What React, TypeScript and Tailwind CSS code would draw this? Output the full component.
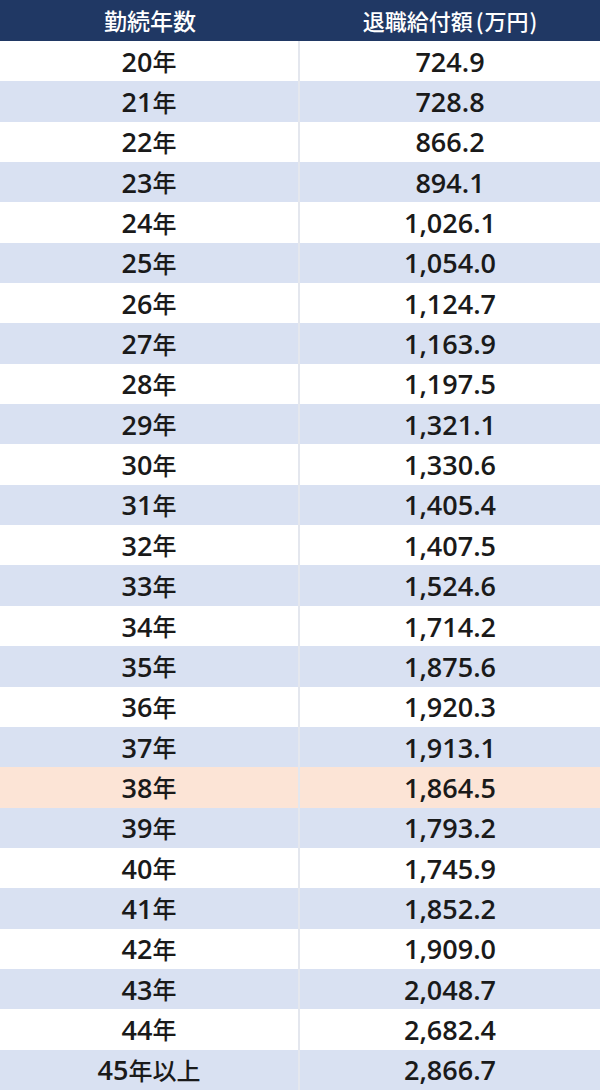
import React from "react";

const rows: [string, string][] = [
  ["20", "724.9"],
  ["21", "728.8"],
  ["22", "866.2"],
  ["23", "894.1"],
  ["24", "1,026.1"],
  ["25", "1,054.0"],
  ["26", "1,124.7"],
  ["27", "1,163.9"],
  ["28", "1,197.5"],
  ["29", "1,321.1"],
  ["30", "1,330.6"],
  ["31", "1,405.4"],
  ["32", "1,407.5"],
  ["33", "1,524.6"],
  ["34", "1,714.2"],
  ["35", "1,875.6"],
  ["36", "1,920.3"],
  ["37", "1,913.1"],
  ["38", "1,864.5"],
  ["39", "1,793.2"],
  ["40", "1,745.9"],
  ["41", "1,852.2"],
  ["42", "1,909.0"],
  ["43", "2,048.7"],
  ["44", "2,682.4"],
  ["45", "2,866.7"],
];

export default function App() {
  return (
    <div className="w-[600px] h-[1090px] grid grid-cols-[300px_300px] grid-rows-[41px_repeat(26,minmax(0,1fr))] bg-white font-['Open_Sans','Noto_Sans_CJK_JP',sans-serif]">
      <div className="bg-[#203864] text-white text-[23px] font-medium flex items-center justify-center font-['Noto_Sans_CJK_JP',sans-serif]">
        勤続年数
      </div>
      <div className="bg-[#203864] text-white text-[22px] font-medium flex items-center justify-center font-['Noto_Sans_CJK_JP',sans-serif]">
        退職給付額<span className="pl-[3px] pr-[1px]">(</span>万円<span className="pl-[1px]">)</span>
      </div>
      {rows.map(([a, b], i) => {
        const bg =
          a === "38"
            ? "bg-[#fce4d6]"
            : i % 2 === 1
            ? "bg-[#d9e1f2]"
            : "bg-white";
        return (
          <React.Fragment key={a}>
            <div
              className={`${bg} border-r-2 border-[#e4e7ee] flex items-center justify-center text-[27px] font-semibold text-[#1a1a1a] leading-none`}
            >
              <span>{a}</span>
              <span className="text-[24px] font-medium font-['Noto_Sans_CJK_JP',sans-serif]">
                {a === "45" ? "年以上" : "年"}
              </span>
            </div>
            <div
              className={`${bg} flex items-center justify-center text-[27px] font-semibold text-[#1a1a1a] leading-none`}
            >
              <span>{b}</span>
            </div>
          </React.Fragment>
        );
      })}
    </div>
  );
}
